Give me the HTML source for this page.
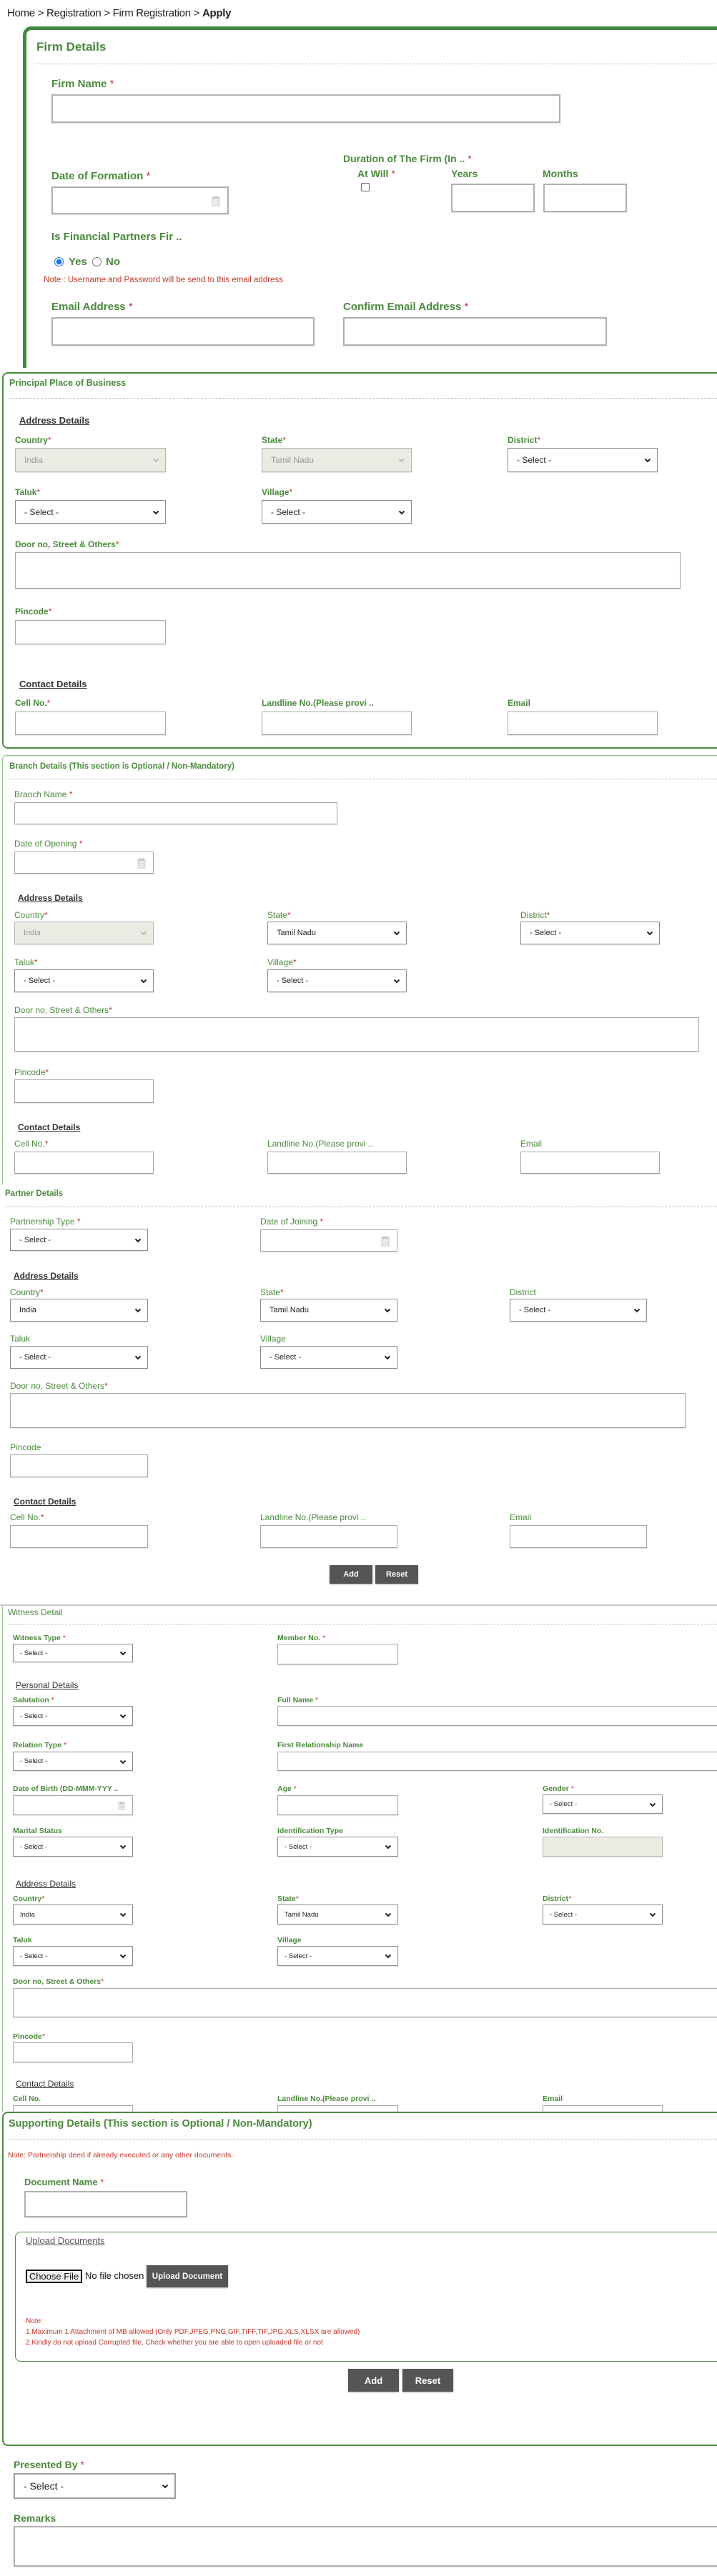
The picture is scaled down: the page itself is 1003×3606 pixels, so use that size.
<!DOCTYPE html>
<html><head><meta charset="utf-8">
<style>
*{box-sizing:border-box;margin:0;padding:0}
body{width:1003px;height:3606px;position:relative;overflow:hidden;background:#fff;font-family:"Liberation Sans",Arial,sans-serif;color:#333}
.a{position:absolute;white-space:nowrap}
.l{position:absolute;white-space:nowrap;color:#4a8a3c;font-weight:bold;font-size:12px;line-height:14px}
.n{font-weight:normal}
.r{color:#c0392b;font-weight:normal}
.h{position:absolute;white-space:nowrap;color:#333;font-weight:bold;font-size:13px;line-height:15px;text-decoration:underline}
.i{position:absolute;background:#fff;border:1px solid #a9a9a9;border-bottom-color:#999;box-shadow:0 1px 1px rgba(0,0,0,.12)}
.s{position:absolute;background:#fff;border:1px solid #8c8c8c;box-shadow:0 1px 1px rgba(0,0,0,.12);font-size:12px;color:#222;display:flex;align-items:center;padding-left:12px}
.s svg{position:absolute;right:8px;top:50%;margin-top:-3px}
.d{background:#ebebe4;color:#999;border-color:#b5b5b5}
.dash{position:absolute;border-top:1px dashed #bdbdbd;height:0}
.btn{position:absolute;background:#555;color:#fff;font-weight:bold;font-size:12px;display:flex;align-items:center;justify-content:center;box-shadow:0 1px 2px rgba(0,0,0,.3)}
.cal{position:absolute;right:10px;top:50%;margin-top:-8px}
</style></head><body>
<svg width="0" height="0" style="position:absolute"><defs>
<symbol id="cv" viewBox="0 0 10 7"><polyline points="1.5,1.5 5,5 8.5,1.5" fill="none" stroke="#222" stroke-width="2"/></symbol>
<symbol id="cg" viewBox="0 0 10 7"><polyline points="1.5,1.5 5,5 8.5,1.5" fill="none" stroke="#aaa" stroke-width="1.5"/></symbol>
<symbol id="ca" viewBox="0 0 12 16"><rect x="1" y="3" width="10" height="12" fill="#f2f2f2" stroke="#c8c8c8"/><rect x="1" y="3" width="10" height="3" fill="#d6d6d6"/><line x1="4" y1="1" x2="4" y2="5" stroke="#bbb" stroke-width="1.5"/><line x1="8" y1="1" x2="8" y2="5" stroke="#bbb" stroke-width="1.5"/><g fill="#ccc"><rect x="3" y="8" width="1.5" height="1.5"/><rect x="5.5" y="8" width="1.5" height="1.5"/><rect x="8" y="8" width="1.5" height="1.5"/><rect x="3" y="11" width="1.5" height="1.5"/><rect x="5.5" y="11" width="1.5" height="1.5"/><rect x="8" y="11" width="1.5" height="1.5"/></g></symbol>
</defs></svg>

<!-- Breadcrumb -->
<div class="a" style="left:10px;top:10px;font-size:15px;line-height:18px;color:#222;letter-spacing:-0.3px">Home &gt; Registration &gt; Firm Registration &gt; <b>Apply</b></div>

<!-- Firm Details -->
<div class="a" style="left:32px;top:37px;width:1000px;height:478px;border-top:5px solid #3f8a3f;border-left:5px solid #3f8a3f;border-top-left-radius:12px"></div>
<div class="l" style="left:51px;top:56px;font-size:17px;line-height:20px">Firm Details</div>
<div class="dash" style="left:51px;top:89px;width:960px"></div>
<div class="l" style="left:72px;top:109px;font-size:15px;line-height:18px">Firm Name <span class="r">*</span></div>
<div class="i" style="left:72px;top:132px;width:712px;height:40px;border-width:2px;border-color:#b0b0b0"></div>
<div class="l" style="left:480px;top:214px;font-size:14px;line-height:17px">Duration of The Firm (In .. <span class="r">*</span></div>
<div class="l" style="left:500px;top:235px;font-size:14px;line-height:17px">At Will <span class="r">*</span></div>
<div class="l" style="left:631px;top:235px;font-size:14px;line-height:17px">Years</div>
<div class="l" style="left:759px;top:235px;font-size:14px;line-height:17px">Months</div>
<div class="a" style="left:505px;top:256px;width:12px;height:12px;border:1px solid #666;border-radius:2px"></div>
<div class="l" style="left:72px;top:238px;font-size:15px;line-height:18px">Date of Formation <span class="r">*</span></div>
<div class="i" style="left:72px;top:261px;width:248px;height:39px;border-width:2px;border-color:#b0b0b0"><svg class="cal" width="12" height="16"><use href="#ca"/></svg></div>
<div class="i" style="left:631px;top:257px;width:117px;height:40px;border-width:2px;border-color:#b0b0b0"></div>
<div class="i" style="left:760px;top:257px;width:117px;height:40px;border-width:2px;border-color:#b0b0b0"></div>
<div class="l" style="left:72px;top:323px;font-size:15px;line-height:18px">Is Financial Partners Fir ..</div>
<div class="a" style="left:76px;top:360px;width:13px;height:13px;border-radius:50%;border:1px solid #1a73e8;background:radial-gradient(circle,#1a73e8 0 3.5px,#fff 4px)"></div>
<div class="l" style="left:96px;top:358px;font-size:15px;line-height:18px">Yes</div>
<div class="a" style="left:129px;top:360px;width:13px;height:13px;border-radius:50%;border:1px solid #777"></div>
<div class="l" style="left:148px;top:358px;font-size:15px;line-height:18px">No</div>
<div class="a" style="left:61px;top:385px;font-size:11.5px;line-height:14px;color:#c0392b">Note : Username and Password will be send to this email address</div>
<div class="l" style="left:72px;top:421px;font-size:15px;line-height:18px">Email Address <span class="r">*</span></div>
<div class="l" style="left:480px;top:421px;font-size:15px;line-height:18px">Confirm Email Address <span class="r">*</span></div>
<div class="i" style="left:72px;top:444px;width:368px;height:40px;border-width:2px;border-color:#b0b0b0"></div>
<div class="i" style="left:480px;top:444px;width:369px;height:40px;border-width:2px;border-color:#b0b0b0"></div>

<!-- Principal Place of Business -->
<div class="a" style="left:3px;top:521px;width:1020px;height:527px;border:2px solid #4a8a3f;border-radius:8px"></div>
<div class="l" style="left:13px;top:529px;font-size:12.5px;line-height:15px">Principal Place of Business</div>
<div class="dash" style="left:12px;top:557px;width:991px"></div>
<div class="h" style="left:27px;top:581px">Address Details</div>
<div class="l" style="left:21px;top:609px">Country<span class="r">*</span></div>
<div class="l" style="left:366px;top:609px">State<span class="r">*</span></div>
<div class="l" style="left:710px;top:609px">District<span class="r">*</span></div>
<div class="s d" style="left:21px;top:627px;width:211px;height:34px">India<svg width="10" height="7"><use href="#cg"/></svg></div>
<div class="s d" style="left:366px;top:627px;width:210px;height:34px">Tamil Nadu<svg width="10" height="7"><use href="#cg"/></svg></div>
<div class="s" style="left:710px;top:627px;width:210px;height:34px">- Select -<svg width="10" height="7"><use href="#cv"/></svg></div>
<div class="l" style="left:21px;top:682px">Taluk<span class="r">*</span></div>
<div class="l" style="left:366px;top:682px">Village<span class="r">*</span></div>
<div class="s" style="left:21px;top:700px;width:211px;height:33px">- Select -<svg width="10" height="7"><use href="#cv"/></svg></div>
<div class="s" style="left:366px;top:700px;width:210px;height:33px">- Select -<svg width="10" height="7"><use href="#cv"/></svg></div>
<div class="l" style="left:21px;top:755px">Door no, Street &amp; Others<span class="r">*</span></div>
<div class="i" style="left:21px;top:773px;width:931px;height:51px"></div>
<div class="l" style="left:21px;top:849px">Pincode<span class="r">*</span></div>
<div class="i" style="left:21px;top:868px;width:211px;height:34px"></div>
<div class="h" style="left:27px;top:950px">Contact Details</div>
<div class="l" style="left:21px;top:977px">Cell No.<span class="r">*</span></div>
<div class="l" style="left:366px;top:977px">Landline No.(Please provi ..</div>
<div class="l" style="left:710px;top:977px">Email</div>
<div class="i" style="left:21px;top:996px;width:211px;height:33px"></div>
<div class="i" style="left:366px;top:996px;width:210px;height:33px"></div>
<div class="i" style="left:710px;top:996px;width:210px;height:33px"></div>

<!-- Branch Details -->
<div class="a" style="left:3px;top:1057px;width:1020px;height:601px;border-top:1px solid #8cc07f;border-left:1px solid #8cc07f;border-top-left-radius:6px"></div>
<div class="l" style="left:13px;top:1066px;font-size:11.5px">Branch Details (This section is Optional / Non-Mandatory)</div>
<div class="dash" style="left:12px;top:1090px;width:991px"></div>
<div class="l n" style="left:20px;top:1105px">Branch Name <span class="r">*</span></div>
<div class="i" style="left:20px;top:1123px;width:452px;height:31px"></div>
<div class="l n" style="left:20px;top:1174px">Date of Opening <span class="r">*</span></div>
<div class="i" style="left:20px;top:1192px;width:195px;height:31px"><svg class="cal" width="12" height="16"><use href="#ca"/></svg></div>
<div class="h" style="left:25px;top:1250px;font-size:12px">Address Details</div>
<div class="l n" style="left:20px;top:1274px">Country<span class="r">*</span></div>
<div class="l n" style="left:374px;top:1274px">State<span class="r">*</span></div>
<div class="l n" style="left:728px;top:1274px">District<span class="r">*</span></div>
<div class="s d" style="left:20px;top:1290px;width:195px;height:32px;font-size:11px">India<svg width="10" height="7"><use href="#cg"/></svg></div>
<div class="s" style="left:374px;top:1290px;width:195px;height:32px;font-size:11px">Tamil Nadu<svg width="10" height="7"><use href="#cv"/></svg></div>
<div class="s" style="left:728px;top:1290px;width:195px;height:32px;font-size:11px">- Select -<svg width="10" height="7"><use href="#cv"/></svg></div>
<div class="l n" style="left:20px;top:1340px">Taluk<span class="r">*</span></div>
<div class="l n" style="left:374px;top:1340px">Village<span class="r">*</span></div>
<div class="s" style="left:20px;top:1357px;width:195px;height:32px;font-size:11px">- Select -<svg width="10" height="7"><use href="#cv"/></svg></div>
<div class="s" style="left:374px;top:1357px;width:195px;height:32px;font-size:11px">- Select -<svg width="10" height="7"><use href="#cv"/></svg></div>
<div class="l n" style="left:20px;top:1407px">Door no, Street &amp; Others<span class="r">*</span></div>
<div class="i" style="left:20px;top:1424px;width:958px;height:48px"></div>
<div class="l n" style="left:20px;top:1494px">Pincode<span class="r">*</span></div>
<div class="i" style="left:20px;top:1511px;width:195px;height:33px"></div>
<div class="h" style="left:25px;top:1571px;font-size:12px">Contact Details</div>
<div class="l n" style="left:20px;top:1594px">Cell No.<span class="r">*</span></div>
<div class="l n" style="left:374px;top:1594px">Landline No.(Please provi ..</div>
<div class="l n" style="left:728px;top:1594px">Email</div>
<div class="i" style="left:20px;top:1612px;width:195px;height:31px"></div>
<div class="i" style="left:374px;top:1612px;width:195px;height:31px"></div>
<div class="i" style="left:728px;top:1612px;width:195px;height:31px"></div>

<!-- Partner Details -->
<div class="l" style="left:7px;top:1664px;font-size:11.5px">Partner Details</div>
<div class="dash" style="left:7px;top:1689px;width:996px"></div>
<div class="l n" style="left:14px;top:1703px">Partnership Type <span class="r">*</span></div>
<div class="l n" style="left:364px;top:1703px">Date of Joining <span class="r">*</span></div>
<div class="s" style="left:14px;top:1720px;width:193px;height:31px;font-size:11px">- Select -<svg width="10" height="7"><use href="#cv"/></svg></div>
<div class="i" style="left:364px;top:1721px;width:192px;height:31px"><svg class="cal" width="12" height="16"><use href="#ca"/></svg></div>
<div class="h" style="left:19px;top:1779px;font-size:12px">Address Details</div>
<div class="l n" style="left:14px;top:1802px">Country<span class="r">*</span></div>
<div class="l n" style="left:364px;top:1802px">State<span class="r">*</span></div>
<div class="l n" style="left:713px;top:1802px">District</div>
<div class="s" style="left:14px;top:1818px;width:193px;height:32px;font-size:11px">India<svg width="10" height="7"><use href="#cv"/></svg></div>
<div class="s" style="left:364px;top:1818px;width:192px;height:32px;font-size:11px">Tamil Nadu<svg width="10" height="7"><use href="#cv"/></svg></div>
<div class="s" style="left:713px;top:1818px;width:192px;height:32px;font-size:11px">- Select -<svg width="10" height="7"><use href="#cv"/></svg></div>
<div class="l n" style="left:14px;top:1867px">Taluk</div>
<div class="l n" style="left:364px;top:1867px">Village</div>
<div class="s" style="left:14px;top:1884px;width:193px;height:32px;font-size:11px">- Select -<svg width="10" height="7"><use href="#cv"/></svg></div>
<div class="s" style="left:364px;top:1884px;width:192px;height:32px;font-size:11px">- Select -<svg width="10" height="7"><use href="#cv"/></svg></div>
<div class="l n" style="left:14px;top:1933px">Door no, Street &amp; Others<span class="r">*</span></div>
<div class="i" style="left:14px;top:1950px;width:945px;height:49px"></div>
<div class="l n" style="left:14px;top:2019px">Pincode</div>
<div class="i" style="left:14px;top:2036px;width:193px;height:32px"></div>
<div class="h" style="left:19px;top:2095px;font-size:12px">Contact Details</div>
<div class="l n" style="left:14px;top:2117px">Cell No.<span class="r">*</span></div>
<div class="l n" style="left:364px;top:2117px">Landline No.(Please provi ..</div>
<div class="l n" style="left:713px;top:2117px">Email</div>
<div class="i" style="left:14px;top:2135px;width:193px;height:32px"></div>
<div class="i" style="left:364px;top:2135px;width:192px;height:32px"></div>
<div class="i" style="left:713px;top:2135px;width:192px;height:32px"></div>
<div class="btn" style="left:461px;top:2191px;width:60px;height:26px;font-size:11px">Add</div>
<div class="btn" style="left:525px;top:2191px;width:60px;height:26px;font-size:11px">Reset</div>

<!-- Witness Detail -->
<div class="a" style="left:0;top:2246px;width:1003px;height:0;border-top:2px solid #c8c8c8"></div>
<div class="a" style="left:3px;top:2248px;width:0;height:708px;border-left:1px solid #9cc592"></div>
<div class="l n" style="left:11px;top:2250px;font-size:12px">Witness Detail</div>
<div class="dash" style="left:11px;top:2273px;width:992px"></div>
<div class="l" style="left:18px;top:2287px;font-size:10.5px;line-height:13px">Witness Type <span class="r">*</span></div>
<div class="l" style="left:388px;top:2287px;font-size:10.5px;line-height:13px">Member No. <span class="r">*</span></div>
<div class="s" style="left:18px;top:2301px;width:168px;height:26px;font-size:9.5px;padding-left:9px">- Select -<svg width="10" height="7"><use href="#cv"/></svg></div>
<div class="i" style="left:388px;top:2301px;width:169px;height:29px"></div>
<div class="h" style="left:22px;top:2352px;font-size:12px;font-weight:normal">Personal Details</div>
<div class="l" style="left:18px;top:2374px;font-size:10.5px;line-height:13px">Salutation <span class="r">*</span></div>
<div class="l" style="left:388px;top:2374px;font-size:10.5px;line-height:13px">Full Name <span class="r">*</span></div>
<div class="s" style="left:18px;top:2388px;width:168px;height:28px;font-size:9.5px;padding-left:9px">- Select -<svg width="10" height="7"><use href="#cv"/></svg></div>
<div class="i" style="left:388px;top:2388px;width:630px;height:28px"></div>
<div class="l" style="left:18px;top:2437px;font-size:10.5px;line-height:13px">Relation Type <span class="r">*</span></div>
<div class="l" style="left:388px;top:2437px;font-size:10.5px;line-height:13px">First Relationship Name</div>
<div class="s" style="left:18px;top:2452px;width:168px;height:27px;font-size:9.5px;padding-left:9px">- Select -<svg width="10" height="7"><use href="#cv"/></svg></div>
<div class="i" style="left:388px;top:2452px;width:630px;height:27px"></div>
<div class="l" style="left:18px;top:2498px;font-size:10.5px;line-height:13px">Date of Birth (DD-MMM-YYY ..</div>
<div class="l" style="left:388px;top:2498px;font-size:10.5px;line-height:13px">Age <span class="r">*</span></div>
<div class="l" style="left:759px;top:2498px;font-size:10.5px;line-height:13px">Gender <span class="r">*</span></div>
<div class="i" style="left:18px;top:2513px;width:168px;height:28px"><svg class="cal" width="10" height="13" style="margin-top:-6px"><use href="#ca"/></svg></div>
<div class="i" style="left:388px;top:2513px;width:169px;height:28px"></div>
<div class="s" style="left:759px;top:2512px;width:168px;height:27px;font-size:9.5px;padding-left:9px">- Select -<svg width="10" height="7"><use href="#cv"/></svg></div>
<div class="l" style="left:18px;top:2557px;font-size:10.5px;line-height:13px">Marital Status</div>
<div class="l" style="left:388px;top:2557px;font-size:10.5px;line-height:13px">Identification Type</div>
<div class="l" style="left:759px;top:2557px;font-size:10.5px;line-height:13px">Identification No.</div>
<div class="s" style="left:18px;top:2571px;width:168px;height:28px;font-size:9.5px;padding-left:9px">- Select -<svg width="10" height="7"><use href="#cv"/></svg></div>
<div class="s" style="left:388px;top:2571px;width:169px;height:28px;font-size:9.5px;padding-left:9px">- Select -<svg width="10" height="7"><use href="#cv"/></svg></div>
<div class="i" style="left:759px;top:2571px;width:168px;height:28px;background:#ebebe4;border-color:#b5b5b5"></div>
<div class="h" style="left:22px;top:2630px;font-size:12px;font-weight:normal">Address Details</div>
<div class="l" style="left:18px;top:2652px;font-size:10.5px;line-height:13px">Country<span class="r">*</span></div>
<div class="l" style="left:388px;top:2652px;font-size:10.5px;line-height:13px">State<span class="r">*</span></div>
<div class="l" style="left:759px;top:2652px;font-size:10.5px;line-height:13px">District<span class="r">*</span></div>
<div class="s" style="left:18px;top:2666px;width:168px;height:28px;font-size:9.5px;padding-left:9px">India<svg width="10" height="7"><use href="#cv"/></svg></div>
<div class="s" style="left:388px;top:2666px;width:169px;height:28px;font-size:9.5px;padding-left:9px">Tamil Nadu<svg width="10" height="7"><use href="#cv"/></svg></div>
<div class="s" style="left:759px;top:2666px;width:168px;height:28px;font-size:9.5px;padding-left:9px">- Select -<svg width="10" height="7"><use href="#cv"/></svg></div>
<div class="l" style="left:18px;top:2710px;font-size:10.5px;line-height:13px">Taluk</div>
<div class="l" style="left:388px;top:2710px;font-size:10.5px;line-height:13px">Village</div>
<div class="s" style="left:18px;top:2724px;width:168px;height:28px;font-size:9.5px;padding-left:9px">- Select -<svg width="10" height="7"><use href="#cv"/></svg></div>
<div class="s" style="left:388px;top:2724px;width:169px;height:28px;font-size:9.5px;padding-left:9px">- Select -<svg width="10" height="7"><use href="#cv"/></svg></div>
<div class="l" style="left:18px;top:2768px;font-size:10.5px;line-height:13px">Door no, Street &amp; Others<span class="r">*</span></div>
<div class="i" style="left:18px;top:2783px;width:1000px;height:41px"></div>
<div class="l" style="left:18px;top:2845px;font-size:10.5px;line-height:13px">Pincode<span class="r">*</span></div>
<div class="i" style="left:18px;top:2859px;width:168px;height:28px"></div>
<div class="h" style="left:22px;top:2910px;font-size:12px;font-weight:normal">Contact Details</div>
<div class="l" style="left:18px;top:2932px;font-size:10.5px;line-height:13px">Cell No.</div>
<div class="l" style="left:388px;top:2932px;font-size:10.5px;line-height:13px">Landline No.(Please provi ..</div>
<div class="l" style="left:759px;top:2932px;font-size:10.5px;line-height:13px">Email</div>
<div class="i" style="left:18px;top:2947px;width:168px;height:28px"></div>
<div class="i" style="left:388px;top:2947px;width:169px;height:28px"></div>
<div class="i" style="left:759px;top:2947px;width:168px;height:28px"></div>

<!-- Supporting Details -->
<div class="a" style="left:3px;top:2956px;width:1020px;height:468px;border:2px solid #4a8a3f;border-radius:8px;background:#fff"></div>
<div class="l" style="left:12px;top:2964px;font-size:14.5px;line-height:18px">Supporting Details (This section is Optional / Non-Mandatory)</div>
<div class="dash" style="left:11px;top:2994px;width:992px"></div>
<div class="a" style="left:11px;top:3011px;font-size:10.5px;line-height:13px;color:#c0392b">Note: Partnership deed if already executed or any other documents.</div>
<div class="l" style="left:34px;top:3047px;font-size:13px;line-height:16px">Document Name <span class="r">*</span></div>
<div class="i" style="left:34px;top:3067px;width:228px;height:37px;border-width:2px;border-color:#b0b0b0"></div>
<div class="a" style="left:21px;top:3124px;width:1000px;height:182px;border:1px solid #4a8a3f;border-radius:8px"></div>
<div class="a" style="left:36px;top:3129px;font-size:13px;line-height:16px;color:#555;text-decoration:underline">Upload Documents</div>
<div class="a" style="left:36px;top:3177px;width:79px;height:19px;border:2px solid #111;background:#efefef;font-size:13px;line-height:15px;text-align:center;color:#111">Choose File</div>
<div class="a" style="left:119px;top:3178px;font-size:13px;line-height:16px;color:#111">No file chosen</div>
<div class="btn" style="left:205px;top:3171px;width:114px;height:31px;font-size:11.5px">Upload Document</div>
<div class="a" style="left:36px;top:3243px;font-size:10px;line-height:13px;color:#c0392b">Note:</div>
<div class="a" style="left:36px;top:3258px;font-size:10px;line-height:13px;color:#c0392b">1.Maximum 1 Attachment of MB allowed (Only PDF,JPEG,PNG,GIF,TIFF,TIF,JPG,XLS,XLSX are allowed)</div>
<div class="a" style="left:36px;top:3273px;font-size:10px;line-height:13px;color:#c0392b">2.Kindly do not upload Corrupted file, Check whether you are able to open uploaded file or not</div>
<div class="btn" style="left:487px;top:3316px;width:71px;height:32px;font-size:13px">Add</div>
<div class="btn" style="left:563px;top:3316px;width:71px;height:32px;font-size:13px">Reset</div>

<!-- Presented By / Remarks -->
<div class="l" style="left:19px;top:3442px;font-size:14px;line-height:17px">Presented By <span class="r">*</span></div>
<div class="s" style="left:19px;top:3462px;width:227px;height:36px;font-size:14px;border-width:2px;border-color:#a0a0a0">- Select -<svg width="10" height="7"><use href="#cv"/></svg></div>
<div class="l" style="left:19px;top:3517px;font-size:14px;line-height:17px">Remarks</div>
<div class="i" style="left:19px;top:3536px;width:1000px;height:57px;border-width:2px;border-color:#b0b0b0"></div>
</body></html>
